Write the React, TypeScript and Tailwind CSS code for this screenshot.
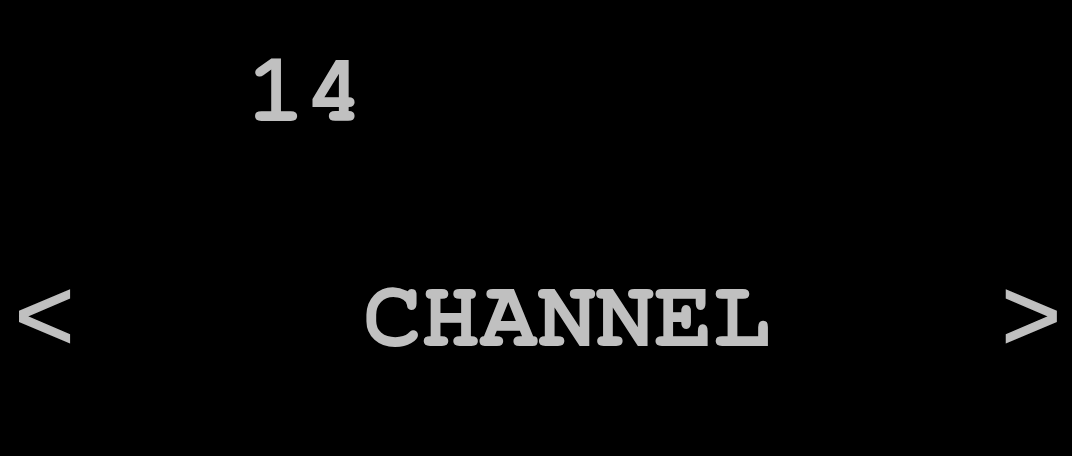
export default function App() {
  return (
    <div className="w-[1072px] h-[456px] bg-black text-[#c0c0c0] overflow-hidden whitespace-pre">
      <div className="pt-[43px] pl-[247px] font-['FreeMono','Courier_New','Liberation_Mono',monospace] font-bold text-[97px] leading-[97px]">14</div>
      <div className="mt-[128px] flex items-start">
        <span className="ml-[14px] mt-[4px] font-['Liberation_Mono','Courier_New',monospace] font-normal text-[102px] leading-[103px] [-webkit-text-stroke:1.5px_#c0c0c0]">&lt;</span>
        <span className="ml-[288px] font-['FreeMono','Courier_New','Liberation_Mono',monospace] font-bold text-[97px] leading-[97px]">CHANNEL</span>
        <span className="ml-[230px] mt-[4px] font-['Liberation_Mono','Courier_New',monospace] font-normal text-[102px] leading-[103px] [-webkit-text-stroke:1.5px_#c0c0c0]">&gt;</span>
      </div>
    </div>
  );
}
